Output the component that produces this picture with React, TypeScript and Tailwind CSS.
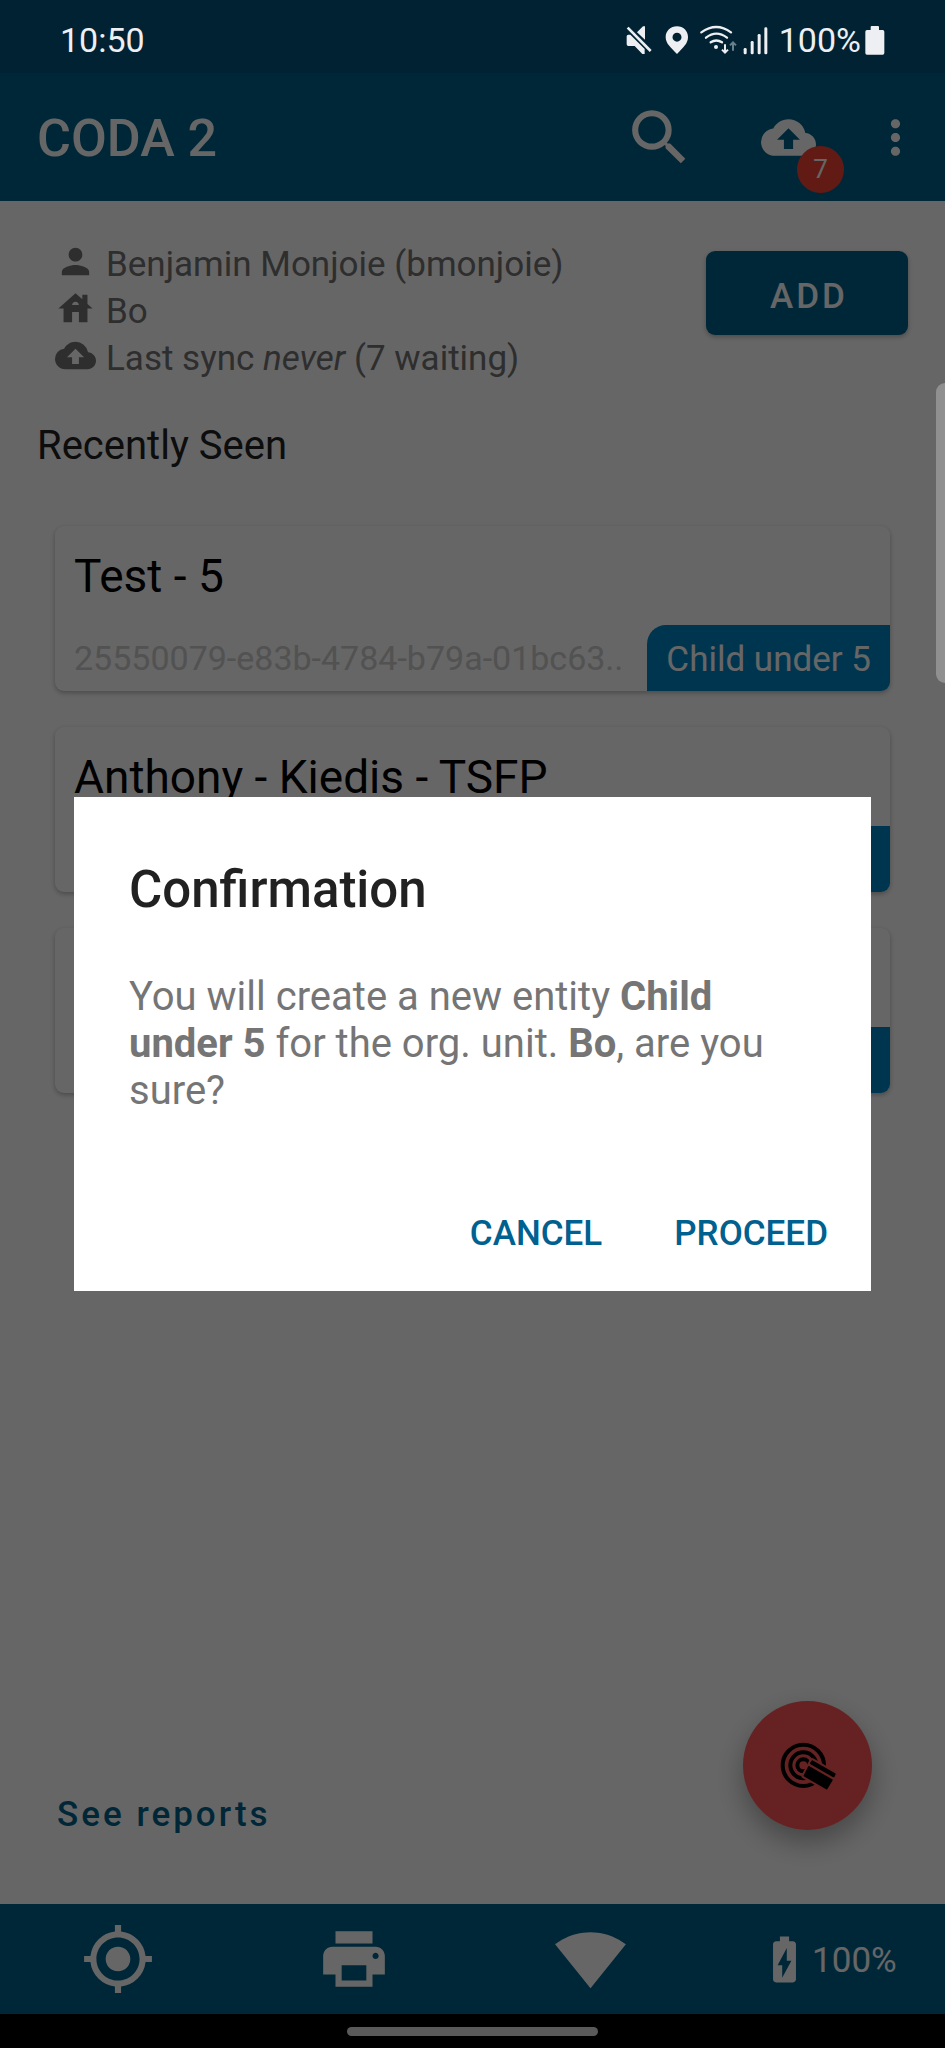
import type { ReactNode } from "react";
import {
  MdBackup,
  MdBatteryChargingFull,
  MdHouse,
  MdMoreVert,
  MdMyLocation,
  MdPerson,
  MdPrint,
  MdSearch,
  MdSignalWifi4Bar,
} from "react-icons/md";

function StatusBar() {
  return (
    <div className="relative z-20 flex h-[73px] items-center justify-between bg-[#002233] pt-1.5 pr-[60px] pl-[60px] text-[34px] leading-none text-[#eeeff2]">
      <span>10:50</span>
      <div className="flex items-center">
        <svg viewBox="75 66 78 90" className="mr-[13px] h-[30px] w-[26px]" fill="currentColor" aria-hidden="true">
          <path d="M77 100q0-5 5-5h6L131 138v15h-7L101 129H82q-5 0-5-5z" />
          <path d="M108 88L126 70h6v40z" />
          <path d="M80 74L149 144" stroke="currentColor" strokeWidth="8" />
        </svg>
        <svg viewBox="190 66 72 90" className="mr-[11px] h-[30px] w-6" fill="currentColor" aria-hidden="true">
          <path
            fillRule="evenodd"
            d="M226 70c-19 0-34 14-34 32 0 20 16 32 34 51 18-19 33-31 33-51 0-18-14-32-33-32zm0 19a13 13 0 1 1 0 27 13 13 0 0 1 0-27z"
          />
        </svg>
        <svg viewBox="295 66 114 90" className="mr-[5px] h-[30px] w-[38px]" fill="none" stroke="currentColor" aria-hidden="true">
          <path d="M299 88Q344 56 388 88" strokeWidth="7" strokeLinecap="round" />
          <path d="M313 104Q344 80 376 104" strokeWidth="7" strokeLinecap="round" />
          <path d="M327 118Q344 107 361 118" strokeWidth="7" strokeLinecap="round" />
          <circle cx="343" cy="132" r="6" fill="currentColor" stroke="none" />
          <path d="M370 124v24M361 140l9 9 9-9" strokeWidth="6" />
          <path d="M394 143v-24M385 127l9-9 9 9" strokeWidth="6" className="stroke-[#66808c]" />
        </svg>
        <svg viewBox="427 66 78 90" className="mr-[10px] h-[30px] w-[26px]" fill="currentColor" aria-hidden="true">
          <rect x="429" y="135" width="9" height="19" rx="4" />
          <rect x="450" y="114" width="9" height="40" rx="4" />
          <rect x="471" y="93" width="9" height="61" rx="4" />
          <rect x="491" y="73" width="9" height="81" rx="4" />
        </svg>
        <span>100%</span>
        <svg viewBox="798 66 60 90" className="ml-1 h-[30px] w-5" fill="currentColor" aria-hidden="true">
          <path d="M815 72q0-3 3-3h19q3 0 3 3v9h11q5 0 5 5v64q0 5-5 5h-47q-5 0-5-5V86q0-5 5-5h11z" />
        </svg>
      </div>
    </div>
  );
}

function AppHeader() {
  return (
    <header className="flex h-32 items-center bg-[#00628c] pr-[22px] pl-[37px] text-white">
      <h1 className="flex-1 pt-1 text-[52px] leading-none font-medium">CODA 2</h1>
      <button type="button" aria-label="Search" className="mr-[65px]">
        <MdSearch className="size-[73px]" />
      </button>
      <button type="button" aria-label="Upload" className="relative mr-[52px]">
        <MdBackup className="size-[55px]" />
        <span className="absolute top-9 left-9 flex size-[47px] items-center justify-center rounded-full bg-[#f44336] text-[26px] leading-none">
          7
        </span>
      </button>
      <button type="button" aria-label="More options">
        <MdMoreVert className="size-[55px]" />
      </button>
    </header>
  );
}

function InfoRow({ icon, children }: { icon: ReactNode; children: ReactNode }) {
  return (
    <li className="flex items-start gap-[10px]">
      {icon}
      <span>{children}</span>
    </li>
  );
}

function EntityCard({ name, id, type }: { name: string; id: string; type: string }) {
  return (
    <article className="flex h-[165px] flex-col justify-between overflow-hidden rounded-[9px] bg-white shadow-[0_2px_5px_rgba(0,0,0,0.28)]">
      <h3 className="pt-6 pl-[19px] text-[46px] leading-[53px] text-black">{name}</h3>
      <div className="flex items-center justify-between">
        <span className="pl-[19px] text-[34px] leading-[47px] text-[#cccccc]">{id}</span>
        <span className="rounded-tl-[19px] bg-[#0086c8] px-[19px] pt-[11px] pb-2 text-[35px] leading-[47px] text-white">
          {type}
        </span>
      </div>
    </article>
  );
}

function ContactlessIcon() {
  return (
    <svg viewBox="232 227 180 180" className="size-[60px]" aria-hidden="true">
      <g fill="none" stroke="black" strokeWidth="12">
        <circle cx="308" cy="315" r="62" />
        <circle cx="308" cy="315" r="39" />
        <circle cx="308" cy="315" r="18" />
      </g>
      <path
        d="M334 300L404 340 378 386 309 347z"
        className="fill-[#ff5555] stroke-[#ff5555]"
        strokeWidth="14"
        strokeLinejoin="round"
      />
      <g fill="black" stroke="black" strokeWidth="6" strokeLinejoin="round">
        <path d="M335 303L402 341 399 348 331 309z" />
        <path d="M325 320L393 359 378 384 312 346z" />
      </g>
    </svg>
  );
}

function BottomBar() {
  return (
    <footer className="grid h-[110px] grid-cols-4 place-items-center bg-[#00628c] text-[35px] text-white">
      <button type="button" aria-label="Location">
        <MdMyLocation className="size-[74px]" />
      </button>
      <button type="button" aria-label="Print">
        <MdPrint className="size-[74px]" />
      </button>
      <button type="button" aria-label="Wifi">
        <MdSignalWifi4Bar className="size-[73px]" />
      </button>
      <div className="flex items-center">
        <MdBatteryChargingFull className="size-[55px]" />
        <span className="pt-1">100%</span>
      </div>
    </footer>
  );
}

function ConfirmationDialog() {
  return (
    <div className="absolute inset-0 z-10 flex items-center justify-center bg-black/60 px-[74px] pt-[73px] pb-[34px]">
      <div
        role="dialog"
        aria-modal="true"
        aria-labelledby="confirm-title"
        className="w-full bg-white px-[55px] pt-[63px] pb-[22px]"
      >
        <h2 id="confirm-title" className="text-[51px] leading-[59px] font-medium text-[#212121]">
          Confirmation
        </h2>
        <p className="mt-[54px] text-[40px] leading-[47px] text-[#757575]">
          You will create a new entity <b>Child under 5</b> for the org. unit. <b>Bo</b>, are you sure?
        </p>
        <div className="-mr-6 mt-[84px] flex justify-end gap-12 text-[35px] leading-[47px] font-medium text-[#006190]">
          <button type="button" className="px-3 py-3">
            CANCEL
          </button>
          <button type="button" className="px-3 py-3">
            PROCEED
          </button>
        </div>
      </div>
    </div>
  );
}

const entities = [
  { name: "Test - 5", id: "25550079-e83b-4784-b79a-01bc63.." },
  { name: "Anthony - Kiedis - TSFP", id: "" },
  { name: "", id: "" },
];

export default function App() {
  return (
    <div className="relative flex min-h-screen flex-col bg-white font-[Roboto,sans-serif]">
      <StatusBar />
      <AppHeader />
      <main className="flex flex-1 flex-col">
        <section className="flex items-start justify-between pt-10 pr-[37px] pl-[55px]">
          <ul className="text-[35px] leading-[47px] text-[#737373]">
            <InfoRow icon={<MdPerson className="size-[41px]" />}>Benjamin Monjoie (bmonjoie)</InfoRow>
            <InfoRow icon={<MdHouse className="size-[41px]" />}>Bo</InfoRow>
            <InfoRow icon={<MdBackup className="size-[41px]" />}>
              Last sync <i>never</i> (7 waiting)
            </InfoRow>
          </ul>
          <button
            type="button"
            className="mt-[10px] h-[84px] w-[202px] rounded-[9px] bg-[#00628c] pt-1.5 pl-1 text-[35px] leading-none font-medium tracking-[3px] text-white shadow-[0_2px_5px_rgba(0,0,0,0.28)]"
          >
            ADD
          </button>
        </section>
        <h2 className="mt-10 px-[37px] text-[40px] leading-[47px] text-[#212121]">Recently Seen</h2>
        <section className="mt-[57px] flex flex-col gap-9 px-[55px]">
          {entities.map((entity, index) => (
            <EntityCard key={index} name={entity.name} id={entity.id} type="Child under 5" />
          ))}
        </section>
        <div className="mt-auto flex items-end justify-between pr-[73px] pb-[66px] pl-[57px]">
          <button type="button" className="text-[35px] leading-[47px] font-medium tracking-[3px] text-[#00628c]">
            See reports
          </button>
          <button
            type="button"
            aria-label="Scan card"
            className="mb-2 flex size-[129px] items-center justify-center rounded-full bg-[#ff5555] shadow-[0_12px_28px_rgba(0,0,0,0.32)]"
          >
            <ContactlessIcon />
          </button>
        </div>
      </main>
      <BottomBar />
      <div className="flex h-[34px] items-center justify-center bg-black">
        <div className="h-[9px] w-[251px] rounded-full bg-[#e0e0e0]" />
      </div>
      <ConfirmationDialog />
      <div className="absolute top-[383px] right-0 z-20 h-[300px] w-[9px] rounded-l-[9px] bg-[#909090]" />
    </div>
  );
}
